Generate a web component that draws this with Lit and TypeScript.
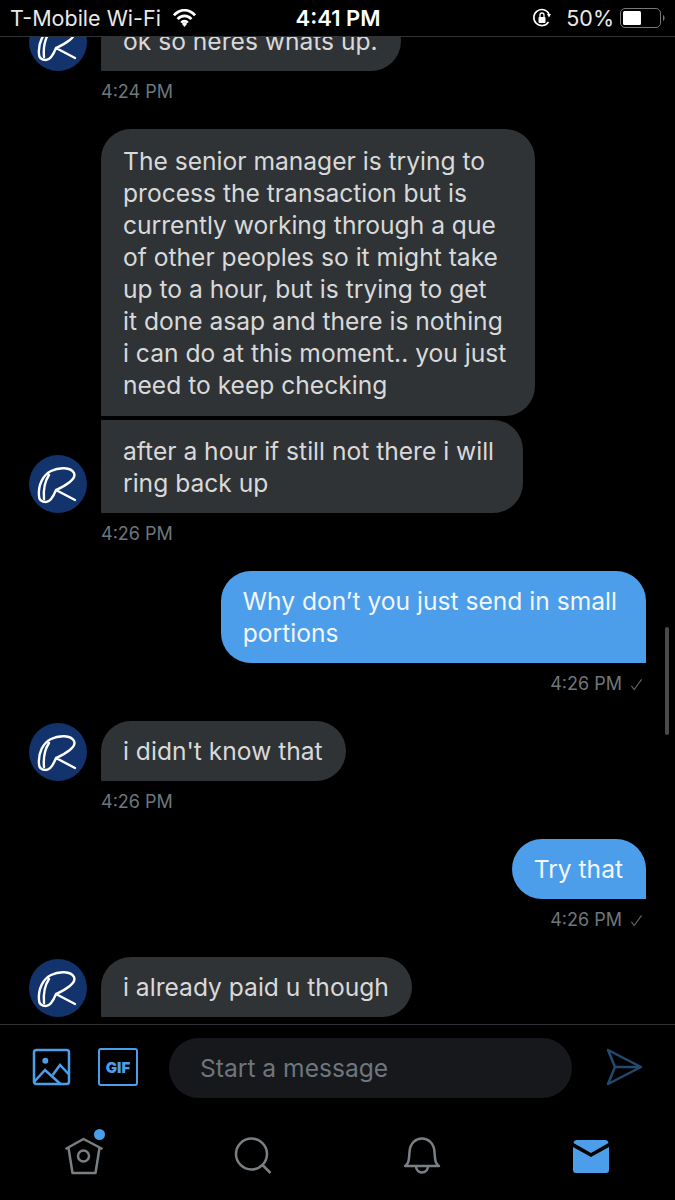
import { LitElement, html, css } from "lit";
import { customElement } from "lit/decorators.js";

const avatar = html`<svg class="avatar" viewBox="0 0 58 58"><circle cx="29" cy="29" r="29" fill="#12336b"/><path d="M10 41C9 30 14 20 22 16C30 12 42 12 45 18C48 24 36 31 27 35L46 45M27 35C25 40 22 47 17 47C12 47 10 45 10 41M20 20C16 26 14 33 15 44" fill="none" stroke="#fff" stroke-width="2.400" stroke-linecap="round" stroke-linejoin="round"/></svg>`;
const check = html`<svg class="check" viewBox="0 0 14 14"><path d="M1.500 8.500L4.500 12.500L12.500 1.500" fill="none" stroke="#5f6469" stroke-width="1.200"/></svg>`;

@customElement("app-root")
export class AppRoot extends LitElement {
  static styles = css`
    :host { display: block; width: 675px; height: 1200px; background: #000; font-family: "Inter", "Liberation Sans", sans-serif; overflow: hidden; position: relative; }
    .status { height: 36px; border-bottom: 1px solid #2f3336; display: flex; align-items: center; padding: 0 9px 0 10px; color: #e9e9e9; font-size: 21.5px; background: #000; position: relative; z-index: 1; }
    .status .left, .status .right { flex: 1; display: flex; align-items: center; }
    .status .right { justify-content: flex-end; }
    .status .time { font-weight: 600; font-size: 22px; color: #fff; }
    .wifi { width: 25px; height: 18px; margin-left: 11px; }
    .lock { width: 20px; height: 20px; margin-right: 14px; }
    .batt { width: 46px; height: 20px; margin-left: 6px; }
    .msgs { height: 987px; overflow: hidden; }
    .list { margin-top: -26px; display: flex; flex-direction: column; }
    .row { display: flex; align-items: flex-end; padding-left: 29px; gap: 14px; }
    .row .spacer, .avatar { width: 58px; height: 58px; flex: none; }
    .row .spacer { height: 0; }
    .bubble { background: #2f3336; color: #d9d9d9; font-size: 24.6px; line-height: 32px; padding: 14px 23px 14px 22px; border-radius: 30px; box-sizing: border-box; white-space: pre; }
    .multi { padding-right: 29px; }
    .in-last { border-bottom-left-radius: 0; }
    .in-first { border-bottom-left-radius: 0; padding-top: 15.5px; padding-bottom: 15.5px; }
    .in-end { border-top-left-radius: 0; margin-top: 4px; padding-top: 14.5px; padding-bottom: 14.5px; }
    .out { justify-content: flex-end; padding-right: 29px; }
    .out .bubble { background: #4c9eeb; color: #f2f6fa; border-bottom-right-radius: 0; }
    .time-row { height: 58px; box-sizing: border-box; display: flex; align-items: center; align-self: stretch; font-size: 18px; line-height: 22px; color: #6e767d; padding: 10px 0 0 101px; align-items: flex-start; }
    .time-row.r { justify-content: flex-end; padding: 10px 32px 0 0; }
    .check { width: 13px; height: 13px; margin: 5px 0 0 8px; }
    .bar { position: absolute; left: 665px; top: 627px; width: 4px; height: 108px; border-radius: 2px; background: #4a4a4a; }
    .compose { border-top: 1px solid #2f3336; height: 99px; padding: 13px 0 0 32px; display: flex; align-items: flex-start; box-sizing: border-box; }
    .pic { width: 39px; height: 38px; margin-top: 10px; flex: none; }
    .gif { width: 40px; height: 38px; margin: 10px 0 0 27px; box-sizing: border-box; border: 2.5px solid #4c9eeb; border-radius: 3px; color: #4c9eeb; font-weight: 900; font-size: 15px; display: flex; align-items: center; justify-content: center; }
    .input { width: 403px; height: 60px; margin-left: 31px; background: #16181c; border-radius: 30px; padding-left: 31px; box-sizing: border-box; display: flex; align-items: center; font-size: 24.6px; color: #6e767d; }
    .send { width: 37px; height: 38px; margin: 10px 0 0 34px; flex: none; }
    .nav { display: flex; height: 77px; align-items: flex-start; }
    .nav div { width: 169px; display: flex; justify-content: center; padding-top: 14px; position: relative; }
    .nav svg { width: 40px; height: 40px; }
    .dot { position: absolute; left: 93.5px; top: 5.5px; width: 11px; height: 11px; border-radius: 50%; background: #4c9eeb; }
  `;

  render() {
    return html`
      <div class="status">
        <div class="left">T-Mobile Wi-Fi
          <svg class="wifi" viewBox="0 0 22 17"><path d="M1 6C7-.5 15-.5 21 6M4.500 9.500C8 5.500 14 5.500 17.500 9.500M8 13C9.500 11 12.500 11 14 13" fill="none" stroke="#fff" stroke-width="2.600"/><path d="M11 17L8.500 14L11 12.500L13.500 14Z" fill="#fff"/></svg>
        </div>
        <div class="time">4:41 PM</div>
        <div class="right">
          <svg class="lock" viewBox="0 0 20 20"><path d="M16.500 14A8 8 0 1 1 17 6" fill="none" stroke="#fff" stroke-width="1.600"/><path d="M15 6H19L17 9.500Z" fill="#fff"/><rect x="6.500" y="9" width="7" height="6" rx="1" fill="#fff"/><path d="M8 9V7A2 2 0 0 1 12 7V9" fill="none" stroke="#fff" stroke-width="1.300"/></svg>
          50%
          <svg class="batt" viewBox="0 0 46 20"><rect x="0.500" y="0.500" width="40" height="19" rx="4.500" fill="none" stroke="#777"/><rect x="3" y="3" width="18" height="14" rx="1.500" fill="#fff"/><path d="M43 7C45 8 45 12 43 13Z" fill="#777"/></svg>
        </div>
      </div>
      <div class="msgs"><div class="list">
        <div class="row">${avatar}<div class="bubble in-last">ok so heres whats up.</div></div>
        <div class="time-row">4:24 PM</div>
        <div class="row"><div class="spacer"></div><div class="bubble in-first multi">The senior manager is trying to
process the transaction but is
currently working through a que
of other peoples so it might take
up to a hour, but is trying to get
it done asap and there is nothing
i can do at this moment.. you just
need to keep checking</div></div>
        <div class="row">${avatar}<div class="bubble in-last in-end multi">after a hour if still not there i will
ring back up</div></div>
        <div class="time-row">4:26 PM</div>
        <div class="row out"><div class="bubble multi">Why don’t you just send in small
portions</div></div>
        <div class="time-row r">4:26 PM ${check}</div>
        <div class="row">${avatar}<div class="bubble in-last">i didn't know that</div></div>
        <div class="time-row">4:26 PM</div>
        <div class="row out"><div class="bubble">Try that</div></div>
        <div class="time-row r">4:26 PM ${check}</div>
        <div class="row">${avatar}<div class="bubble in-last">i already paid u though</div></div>
      </div></div>
      <div class="bar"></div>
      <div class="compose">
        <svg class="pic" viewBox="0 0 39 38"><rect x="2" y="2" width="35" height="34" rx="2.500" fill="none" stroke="#4c9eeb" stroke-width="2.500"/><circle cx="13.300" cy="12.700" r="3" fill="#4c9eeb"/><path d="M2 34L13 22L29 36.500M20.700 27L28 17L37 26.500" fill="none" stroke="#4c9eeb" stroke-width="2.500"/></svg>
        <div class="gif">GIF</div>
        <div class="input">Start a message</div>
        <svg class="send" viewBox="0 0 37 38"><path d="M2 2L35 19L2 36L9 19ZM9 19H35" fill="none" stroke="#214a70" stroke-width="2.500" stroke-linejoin="round"/></svg>
      </div>
      <div class="nav">
        <div><svg viewBox="0 0 40 40"><path d="M1.500 12L19.500 2L38.500 12M4.500 11L8.500 36H31.500L35.500 11" fill="none" stroke="#7a7f84" stroke-width="2.500" stroke-linejoin="round"/><circle cx="19.500" cy="19" r="5.500" fill="none" stroke="#7a7f84" stroke-width="2.500"/></svg><span class="dot"></span></div>
        <div><svg viewBox="0 0 40 40"><circle cx="18.500" cy="17" r="15.500" fill="none" stroke="#7a7f84" stroke-width="2.500"/><path d="M29.500 28L37.500 36" stroke="#7a7f84" stroke-width="2.500"/></svg></div>
        <div><svg viewBox="0 0 40 40"><path d="M3 29H37C33 27 33 22 32.500 15C32 6 26 1.500 20 1.500C14 1.500 8 6 7.500 15C7 22 7 27 3 29ZM14 29C14 37.500 26 37.500 26 29" fill="none" stroke="#7a7f84" stroke-width="2.500" stroke-linejoin="round"/></svg></div>
        <div><svg viewBox="0 0 40 40"><path d="M2.500 6Q3 3 6 3H34Q37 3 37.500 6L20 16Z" fill="#4c9eeb"/><path d="M2 10L20 20L38 10V33Q38 36 35 36H5Q2 36 2 33Z" fill="#4c9eeb"/></svg></div>
      </div>
    `;
  }
}
